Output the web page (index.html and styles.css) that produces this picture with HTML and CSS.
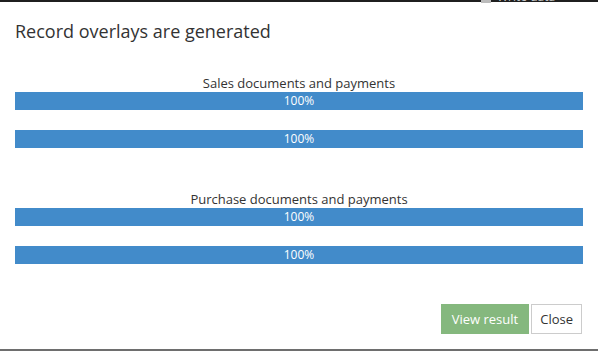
FILE: index.html
```html
<!DOCTYPE html>
<html>
<head>
<meta charset="utf-8">
<link rel="stylesheet" href="styles.css">
</head>
<body>
<div class="topband"></div>
<div class="peek"><span class="peek-box"></span>Write data</div>
<div class="modal">
  <h4 class="title">Record overlays are generated</h4>
  <div class="group">
    <div class="label">Sales documents and payments</div>
    <div class="bar"><div class="fill" style="width:100%">100%</div></div>
    <div class="bar"><div class="fill" style="width:100%">100%</div></div>
  </div>
  <div class="group group-second">
    <div class="label">Purchase documents and payments</div>
    <div class="bar"><div class="fill" style="width:100%">100%</div></div>
    <div class="bar"><div class="fill" style="width:100%">100%</div></div>
  </div>
  <div class="footer">
    <button class="btn btn-success">View result</button>
    <button class="btn btn-default">Close</button>
  </div>
</div>
</body>
</html>
```
FILE: styles.css
```css
html, body {
  margin: 0;
  padding: 0;
  background: #fff;
  font-family: "Open Sans", "Noto Sans", sans-serif;
  color: #333;
  overflow: hidden;
}
.topband {
  height: 2px;
  background: #1f1f1f;
}
.peek {
  position: absolute;
  top: -9px;
  left: 481px;
  font-size: 12px;
  line-height: 12px;
  color: #c8c8c8;
  display: flex;
  gap: 6px;
  align-items: flex-end;
}
.peek-box {
  width: 10px;
  height: 10px;
  background: #bbb;
  display: inline-block;
}
.modal {
  height: 349px;
  border-bottom: 2px solid #6e6e6e;
  padding: 0 15px;
  box-sizing: border-box;
  display: flex;
  flex-direction: column;
}
.title {
  margin: 0;
  padding-top: 16px;
  font-size: 18px;
  font-weight: 400;
  line-height: 26px;
  color: #333;
}
.group {
  margin-top: 30px;
  display: flex;
  flex-direction: column;
}
.group-second {
  margin-top: 42px;
}
.label {
  text-align: center;
  font-size: 13px;
  line-height: 18px;
  color: #333;
}
.bar {
  height: 18px;
  background: #f5f5f5;
}
.bar + .bar {
  margin-top: 20px;
}
.fill {
  height: 18px;
  background: #428bca;
  color: #fff;
  font-size: 12px;
  line-height: 18px;
  text-align: center;
}
.footer {
  margin-top: 40px;
  display: flex;
  justify-content: flex-end;
  gap: 2px;
  padding-right: 1px;
}
.btn {
  font-family: "Open Sans", "Noto Sans", sans-serif;
  font-size: 13px;
  height: 30px;
  padding: 0 10px;
  border: 1px solid transparent;
  border-radius: 0;
  cursor: pointer;
}
.btn-success {
  background: #85b87e;
  border-color: #85b87e;
  color: #fff;
}
.btn-default {
  background: #fff;
  border-color: #ccc;
  color: #333;
  padding: 0 8px;
}
```
